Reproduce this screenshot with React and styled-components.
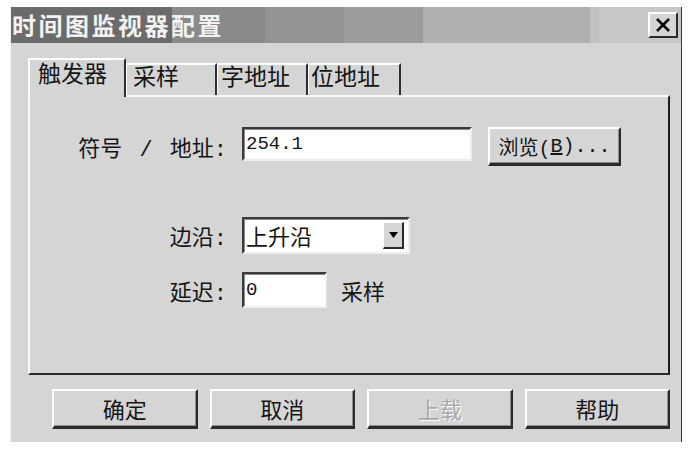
import React from 'react'
import styled, { createGlobalStyle } from 'styled-components'

const GlobalStyle = createGlobalStyle`
  html, body {
    margin: 0;
    background: #ffffff;
  }
  body {
    font-family: "Liberation Mono", "Noto Sans CJK SC", monospace;
    color: #151515;
  }
`

const Window = styled.div`
  margin: 7px 0 0 10px;
  width: 672px;
  height: 435px;
  box-sizing: border-box;
  background: #d5d5d5;
  border-left: 1px solid #f4f4f4;
  border-right: 1px solid #3a3a3a;
  display: flex;
  flex-direction: column;
`

const TitleBar = styled.div`
  height: 36px;
  display: flex;
  align-items: center;
  justify-content: space-between;
  padding: 0 3px 0 1px;
  background: linear-gradient(
    to right,
    #6b6b6b 0 161px,
    #8a8a8a 161px 254px,
    #939393 254px 333px,
    #9c9c9c 333px 412px,
    #b0b0b0 412px 579px,
    #c2c2c2 579px 588px,
    #c7c7c7 588px
  );
`

const Title = styled.span`
  font-family: "Noto Sans CJK SC", sans-serif;
  font-size: 24px;
  font-weight: 700;
  letter-spacing: 2.5px;
  color: #f2f2f2;
  line-height: 1;
`

const CloseButton = styled.div`
  width: 30px;
  height: 26px;
  box-sizing: border-box;
  background: #d5d5d5;
  border-top: 2px solid #ffffff;
  border-left: 2px solid #ffffff;
  border-right: 2px solid #2a2a2a;
  border-bottom: 2px solid #2a2a2a;
  display: flex;
  align-items: center;
  justify-content: center;
`

const Body = styled.div`
  flex: 1;
  padding: 15px 11px 0 17px;
  display: flex;
  flex-direction: column;
`

const TabStrip = styled.div`
  display: flex;
  align-items: flex-end;
  height: 37px;
  position: relative;
  z-index: 1;
`

const Tab = styled.div`
  box-sizing: border-box;
  width: ${p => p.$w}px;
  height: ${p => (p.$active ? 39 : 32)}px;
  margin-bottom: ${p => (p.$active ? -2 : 0)}px;
  padding-left: ${p => p.$pad}px;
  background: #d5d5d5;
  border-top: 2px solid #ffffff;
  border-left: ${p => (p.$active ? 2 : 1)}px solid #ffffff;
  border-right: 2px solid #2e2e2e;
  font-size: 23px;
  line-height: ${p => (p.$active ? 32 : 29)}px;
  white-space: nowrap;
`

const Panel = styled.div`
  height: 280px;
  box-sizing: border-box;
  border-top: 2px solid #fafafa;
  border-left: 2px solid #fafafa;
  border-right: 2px solid #1e1e1e;
  border-bottom: 2px solid #2a2a2a;
  padding-top: 30px;
  display: flex;
  flex-direction: column;
`

const Row = styled.div`
  display: flex;
  align-items: ${p => p.$align || 'center'};
  margin-top: ${p => p.$top || 0}px;
`

const Label = styled.div`
  width: 197px;
  margin-right: 15px;
  text-align: right;
  font-size: 22px;
  word-spacing: 4px;
  white-space: pre;
  align-self: center;
`

const Sunken = styled.div`
  box-sizing: border-box;
  width: ${p => p.$w}px;
  height: ${p => p.$h}px;
  background: #ffffff;
  border-top: 2px solid #3a3a3a;
  border-left: 2px solid #3a3a3a;
  border-right: 2px solid #eeeeee;
  border-bottom: 2px solid #eeeeee;
  box-shadow: inset 1px 1px 0 #8a8a8a;
  display: flex;
  align-items: center;
  justify-content: space-between;
  padding-left: 2px;
  font-size: ${p => p.$fs || 19}px;
`

const DropArrow = styled.div`
  width: 21px;
  height: 27px;
  box-sizing: border-box;
  margin-right: 4px;
  background: #d5d5d5;
  border-top: 1px solid #ffffff;
  border-left: 1px solid #ffffff;
  border-right: 2px solid #2a2a2a;
  border-bottom: 2px solid #2a2a2a;
  display: flex;
  align-items: center;
  justify-content: center;
`

const PushButton = styled.div`
  box-sizing: border-box;
  width: ${p => p.$w}px;
  height: ${p => p.$h}px;
  margin-left: ${p => p.$ml || 0}px;
  background: #d5d5d5;
  border-top: 2px solid #ffffff;
  border-left: 2px solid #ffffff;
  border-right: 2px solid #2b2b2b;
  border-bottom: 3px solid #2b2b2b;
  box-shadow: inset -1px -1px 0 #8c8c8c;
  display: flex;
  align-items: center;
  justify-content: center;
  font-size: ${p => p.$fs || 22}px;
  color: ${p => (p.$disabled ? '#a9a9a9' : '#151515')};
  text-shadow: ${p => (p.$disabled ? '1px 1px 0 #ffffff' : 'none')};
  white-space: pre;
`

const Suffix = styled.span`
  margin-left: 14px;
  font-size: 22px;
`

const Mnemonic = styled.span`
  text-decoration: underline;
`

const ButtonRow = styled.div`
  display: flex;
  gap: 12px;
  padding: 14px 0 0 24px;
`

const App = () => (
  <>
    <GlobalStyle />
    <Window>
      <TitleBar>
        <Title>时间图监视器配置</Title>
        <CloseButton>
          <svg width="14" height="14" viewBox="0 0 14 14">
            <path d="M1 1 L13 13 M13 1 L1 13" stroke="#000" strokeWidth="2.6" />
          </svg>
        </CloseButton>
      </TitleBar>
      <Body>
        <TabStrip>
          <Tab $active $w={98} $pad={8}>触发器</Tab>
          <Tab $w={91} $pad={6}>采样</Tab>
          <Tab $w={91} $pad={3}>字地址</Tab>
          <Tab $w={93} $pad={2}>位地址</Tab>
        </TabStrip>
        <Panel>
          <Row $align="flex-start">
            <Label>符号 / 地址:</Label>
            <Sunken $w={230} $h={34}>254.1</Sunken>
            <PushButton $w={133} $h={39} $ml={16} $fs={20}>
              浏览(<Mnemonic>B</Mnemonic>)...
            </PushButton>
          </Row>
          <Row $top={51}>
            <Label>边沿:</Label>
            <Sunken $w={168} $h={37} $fs={22}>
              上升沿
              <DropArrow>
                <svg width="9" height="6" viewBox="0 0 9 6">
                  <path d="M0 0 H9 L4.5 6 Z" fill="#000" />
                </svg>
              </DropArrow>
            </Sunken>
          </Row>
          <Row $top={18}>
            <Label>延迟:</Label>
            <Sunken $w={85} $h={36}>0</Sunken>
            <Suffix>采样</Suffix>
          </Row>
        </Panel>
        <ButtonRow>
          <PushButton $w={146} $h={40}>确定</PushButton>
          <PushButton $w={146} $h={40}>取消</PushButton>
          <PushButton $w={146} $h={40} $disabled>上载</PushButton>
          <PushButton $w={146} $h={40}>帮助</PushButton>
        </ButtonRow>
      </Body>
    </Window>
  </>
)

export default App
